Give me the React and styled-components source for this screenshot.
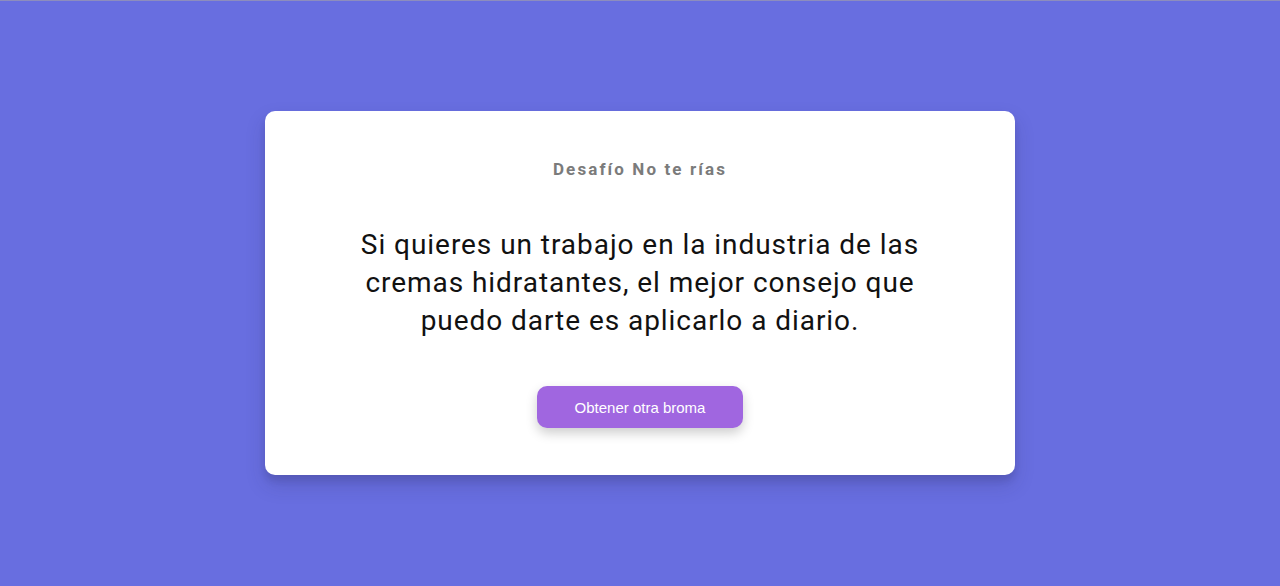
import React from "react";
import styled, { createGlobalStyle } from "styled-components";

const Global = createGlobalStyle`
  html, body { margin: 0; padding: 0; }
  body {
    background: #686ee0;
    font-family: Roboto, "Liberation Sans", sans-serif;
  }
`;

const Page = styled.div`
  min-height: 586px;
  box-sizing: border-box;
  box-shadow: inset 0 1px 0 #8d8dbd;
  display: flex;
  align-items: center;
  justify-content: center;
`;

const Card = styled.div`
  width: 750px;
  box-sizing: border-box;
  background: #ffffff;
  border-radius: 10px;
  padding: 48px 70px 47px;
  display: flex;
  flex-direction: column;
  align-items: center;
  text-align: center;
  box-shadow: 0 10px 20px rgba(40, 40, 90, 0.19), 0 6px 6px rgba(40, 40, 90, 0.15);
`;

const Title = styled.h3`
  margin: 0;
  font-size: 17px;
  line-height: 20px;
  font-weight: 700;
  letter-spacing: 2.1px;
  color: #7b7b7b;
`;

const Joke = styled.p`
  margin: 47px 0 46px;
  max-width: 580px;
  font-size: 28px;
  line-height: 38px;
  font-weight: 400;
  letter-spacing: 0.95px;
  color: #111111;
`;

const Button = styled.button`
  width: 206px;
  height: 42px;
  border: none;
  border-radius: 10px;
  background: #a066e0;
  color: #ffffff;
  font-family: "Liberation Sans", Arial, sans-serif;
  font-size: 15px;
  cursor: pointer;
  box-shadow: 0 5px 12px rgba(0, 0, 0, 0.2);
`;

export default function App() {
  return (
    <>
      <Global />
      <Page>
        <Card>
          <Title>Desafío No te rías</Title>
          <Joke>
            Si quieres un trabajo en la industria de las cremas hidratantes, el
            mejor consejo que puedo darte es aplicarlo a diario.
          </Joke>
          <Button>Obtener otra broma</Button>
        </Card>
      </Page>
    </>
  );
}
